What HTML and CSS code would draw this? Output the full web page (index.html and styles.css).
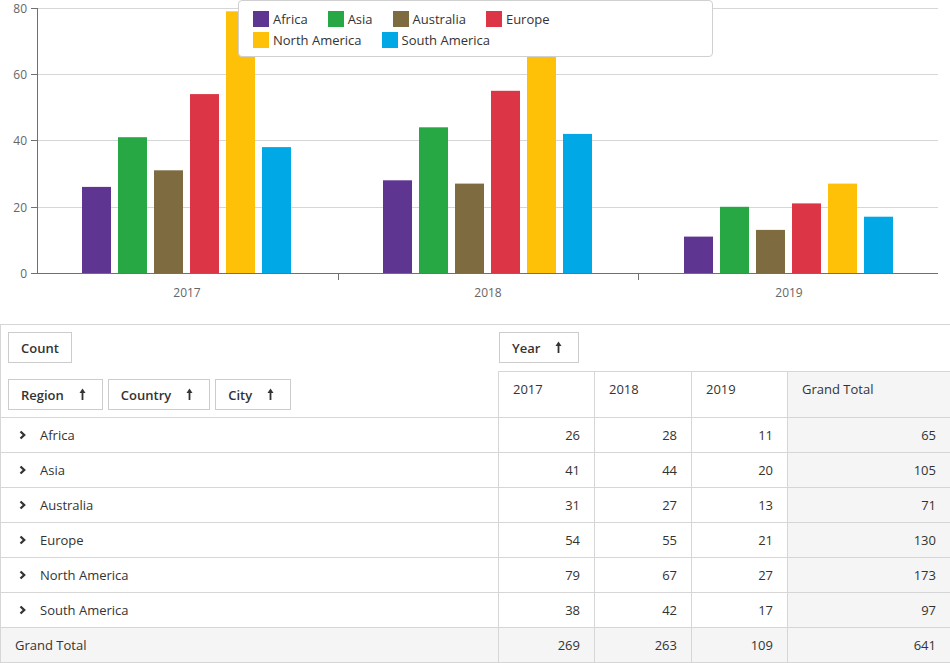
FILE: index.html
```html
<!DOCTYPE html>
<html>
<head>
<meta charset="utf-8">
<link rel="stylesheet" href="styles.css">
</head>
<body>
<div class="chart">
  <svg class="chart-svg" width="950" height="324" viewBox="0 0 950 324">
    <g class="grid">
      <line x1="37" y1="8.5" x2="938" y2="8.5"/>
      <line x1="37" y1="74.5" x2="938" y2="74.5"/>
      <line x1="37" y1="140.5" x2="938" y2="140.5"/>
      <line x1="37" y1="207.5" x2="938" y2="207.5"/>
    </g>
    <g class="bars">
      <rect x="82" y="186.9" width="29" height="86.1" fill="#5f3592"/>
      <rect x="118" y="137.2" width="29" height="135.8" fill="#28a745"/>
      <rect x="154" y="170.3" width="29" height="102.7" fill="#7f6b40"/>
      <rect x="190" y="94.1" width="29" height="178.9" fill="#dc3545"/>
      <rect x="226" y="11.3" width="29" height="261.7" fill="#ffc107"/>
      <rect x="262" y="147.1" width="29" height="125.9" fill="#00a9e6"/>

      <rect x="383" y="180.3" width="29" height="92.7" fill="#5f3592"/>
      <rect x="419" y="127.3" width="29" height="145.7" fill="#28a745"/>
      <rect x="455" y="183.6" width="29" height="89.4" fill="#7f6b40"/>
      <rect x="491" y="90.8" width="29" height="182.2" fill="#dc3545"/>
      <rect x="527" y="51.1" width="29" height="221.9" fill="#ffc107"/>
      <rect x="563" y="133.9" width="29" height="139.1" fill="#00a9e6"/>

      <rect x="684" y="236.6" width="29" height="36.4" fill="#5f3592"/>
      <rect x="720" y="206.8" width="29" height="66.2" fill="#28a745"/>
      <rect x="756" y="229.9" width="29" height="43.1" fill="#7f6b40"/>
      <rect x="792" y="203.4" width="29" height="69.6" fill="#dc3545"/>
      <rect x="828" y="183.6" width="29" height="89.4" fill="#ffc107"/>
      <rect x="864" y="216.7" width="29" height="56.3" fill="#00a9e6"/>
    </g>
    <g class="axis">
      <line x1="37.5" y1="8" x2="37.5" y2="273"/>
      <line x1="31" y1="273.5" x2="938" y2="273.5"/>
      <line x1="31" y1="8.5" x2="37" y2="8.5"/>
      <line x1="31" y1="74.5" x2="37" y2="74.5"/>
      <line x1="31" y1="140.5" x2="37" y2="140.5"/>
      <line x1="31" y1="207.5" x2="37" y2="207.5"/>
      <line x1="338.5" y1="273" x2="338.5" y2="280"/>
      <line x1="638.5" y1="273" x2="638.5" y2="280"/>
    </g>
    <g class="labels">
      <text x="27" y="12.5" text-anchor="end">80</text>
      <text x="27" y="78.5" text-anchor="end">60</text>
      <text x="27" y="145" text-anchor="end">40</text>
      <text x="27" y="211.5" text-anchor="end">20</text>
      <text x="27" y="277.5" text-anchor="end">0</text>
      <text x="187" y="297" text-anchor="middle">2017</text>
      <text x="488" y="297" text-anchor="middle">2018</text>
      <text x="789" y="297" text-anchor="middle">2019</text>
    </g>
  </svg>
  <div class="legend">
    <div class="legend-row">
      <span class="legend-item"><span class="swatch sw-africa"></span>Africa</span>
      <span class="legend-item"><span class="swatch sw-asia"></span>Asia</span>
      <span class="legend-item"><span class="swatch sw-australia"></span>Australia</span>
      <span class="legend-item"><span class="swatch sw-europe"></span>Europe</span>
    </div>
    <div class="legend-row">
      <span class="legend-item"><span class="swatch sw-na"></span>North America</span>
      <span class="legend-item"><span class="swatch sw-sa"></span>South America</span>
    </div>
  </div>
</div>

<div class="pivot">
  <div class="fields-left">
    <div class="btn-row"><span class="fbtn">Count</span></div>
    <div class="btn-row">
      <span class="fbtn">Region<svg class="arrow" width="7" height="12" viewBox="0 0 7 12"><line x1="3.5" y1="3" x2="3.5" y2="12"/><polygon points="0.5,5 3.5,0.5 6.5,5"/></svg></span>
      <span class="fbtn">Country<svg class="arrow" width="7" height="12" viewBox="0 0 7 12"><line x1="3.5" y1="3" x2="3.5" y2="12"/><polygon points="0.5,5 3.5,0.5 6.5,5"/></svg></span>
      <span class="fbtn">City<svg class="arrow" width="7" height="12" viewBox="0 0 7 12"><line x1="3.5" y1="3" x2="3.5" y2="12"/><polygon points="0.5,5 3.5,0.5 6.5,5"/></svg></span>
    </div>
  </div>
  <div class="fields-col">
    <span class="fbtn">Year<svg class="arrow" width="7" height="12" viewBox="0 0 7 12"><line x1="3.5" y1="3" x2="3.5" y2="12"/><polygon points="0.5,5 3.5,0.5 6.5,5"/></svg></span>
  </div>
  <div class="hcell">2017</div>
  <div class="hcell">2018</div>
  <div class="hcell">2019</div>
  <div class="hcell total">Grand Total</div>

  <div class="rlabel"><svg class="chev" width="7" height="10" viewBox="0 0 7 10"><polyline points="1.5,1.5 5.2,5 1.5,8.5"/></svg>Africa</div>
  <div class="vcell">26</div><div class="vcell">28</div><div class="vcell">11</div><div class="vcell total">65</div>

  <div class="rlabel"><svg class="chev" width="7" height="10" viewBox="0 0 7 10"><polyline points="1.5,1.5 5.2,5 1.5,8.5"/></svg>Asia</div>
  <div class="vcell">41</div><div class="vcell">44</div><div class="vcell">20</div><div class="vcell total">105</div>

  <div class="rlabel"><svg class="chev" width="7" height="10" viewBox="0 0 7 10"><polyline points="1.5,1.5 5.2,5 1.5,8.5"/></svg>Australia</div>
  <div class="vcell">31</div><div class="vcell">27</div><div class="vcell">13</div><div class="vcell total">71</div>

  <div class="rlabel"><svg class="chev" width="7" height="10" viewBox="0 0 7 10"><polyline points="1.5,1.5 5.2,5 1.5,8.5"/></svg>Europe</div>
  <div class="vcell">54</div><div class="vcell">55</div><div class="vcell">21</div><div class="vcell total">130</div>

  <div class="rlabel"><svg class="chev" width="7" height="10" viewBox="0 0 7 10"><polyline points="1.5,1.5 5.2,5 1.5,8.5"/></svg>North America</div>
  <div class="vcell">79</div><div class="vcell">67</div><div class="vcell">27</div><div class="vcell total">173</div>

  <div class="rlabel"><svg class="chev" width="7" height="10" viewBox="0 0 7 10"><polyline points="1.5,1.5 5.2,5 1.5,8.5"/></svg>South America</div>
  <div class="vcell">38</div><div class="vcell">42</div><div class="vcell">17</div><div class="vcell total">97</div>

  <div class="rlabel gt">Grand Total</div>
  <div class="vcell gt">269</div><div class="vcell gt">263</div><div class="vcell gt">109</div><div class="vcell gt total">641</div>
</div>
</body>
</html>
```

FILE: styles.css
```css
* { box-sizing: border-box; }
html, body { margin: 0; padding: 0; background: #fff; }
body {
  font-family: "Open Sans", "Noto Sans", sans-serif;
  font-size: 13px;
  color: #333;
  width: 950px;
  overflow: hidden;
}

.chart {
  position: relative;
  height: 324px;
}
.chart-svg { display: block; }
.grid line { stroke: #d6d6d6; stroke-width: 1; }
.axis line { stroke: #707070; stroke-width: 1; }
.labels text {
  font-family: "Open Sans", sans-serif;
  font-size: 12px;
  fill: #666;
}

.legend {
  position: absolute;
  left: 238px;
  top: 0;
  width: 475px;
  height: 57px;
  background: #fff;
  border: 1px solid #d0d0d0;
  border-radius: 4px;
  padding: 7px 14px 5px 14px;
}
.legend-row {
  display: flex;
  gap: 20px;
  height: 21px;
  align-items: center;
}
.legend-item {
  display: flex;
  align-items: center;
  gap: 4px;
  font-size: 13px;
  color: #333;
  white-space: nowrap;
}
.swatch { width: 16px; height: 16px; display: inline-block; }
.sw-africa { background: #5f3592; }
.sw-asia { background: #28a745; }
.sw-australia { background: #7f6b40; }
.sw-europe { background: #dc3545; }
.sw-na { background: #ffc107; }
.sw-sa { background: #00a9e6; }

.pivot {
  display: grid;
  grid-template-columns: 497px 96px 97px 96px 1fr;
  grid-template-rows: 46px 46px repeat(7, 35px);
  border-top: 1px solid #d6d6d6;
  border-left: 1px solid #d6d6d6;
  border-bottom: 1px solid #d6d6d6;
}
.fields-left {
  grid-column: 1;
  grid-row: 1 / span 2;
  padding: 7px;
  display: flex;
  flex-direction: column;
  justify-content: space-between;
}
.btn-row { display: flex; gap: 5px; }
.fields-col {
  grid-column: 2 / -1;
  grid-row: 1;
  padding: 7px 0 0 1px;
}
.fbtn {
  display: inline-flex;
  align-items: center;
  height: 31px;
  border: 1px solid #ccc;
  background: #fff;
  padding: 0 12px 0 12px;
  font-weight: 600;
  color: #333;
  white-space: nowrap;
}
.fbtn .arrow { margin-left: 15px; margin-right: 4px; margin-top: -1px; }
.arrow line { stroke: #333; stroke-width: 1.8; }
.arrow polygon { fill: #333; }

.hcell {
  border-top: 1px solid #d6d6d6;
  border-left: 1px solid #d6d6d6;
  padding: 8px 14px 0 14px;
  line-height: 18px;
}
.total { background: #f5f5f5; }

.rlabel {
  border-top: 1px solid #d6d6d6;
  display: flex;
  align-items: center;
  padding-left: 18px;
}
.rlabel.gt { padding-left: 14px; }
.chev { margin-right: 14px; flex: none; }
.chev polyline { fill: none; stroke: #333; stroke-width: 2.3; }

.vcell {
  border-top: 1px solid #d6d6d6;
  border-left: 1px solid #d6d6d6;
  display: flex;
  align-items: center;
  justify-content: flex-end;
  padding-right: 14px;
}
.gt { background: #f5f5f5; }
```
